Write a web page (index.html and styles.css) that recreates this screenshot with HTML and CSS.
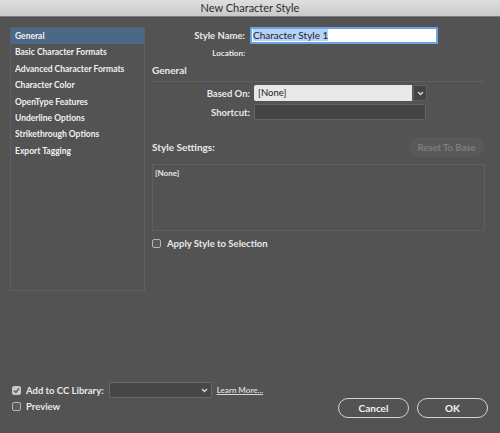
FILE: index.html
```html
<!DOCTYPE html>
<html lang="en">
  <head>
    <meta charset="UTF-8" />
    <title>New Character Style</title>
    <link rel="stylesheet" href="styles.css">
  </head>
  <body>
    <div class="dialog">
      <div class="titlebar">New Character Style</div>

      <div class="main">
        <ul class="sidebar">
          <li class="active">General</li>
          <li>Basic Character Formats</li>
          <li>Advanced Character Formats</li>
          <li>Character Color</li>
          <li>OpenType Features</li>
          <li>Underline Options</li>
          <li>Strikethrough Options</li>
          <li>Export Tagging</li>
        </ul>

        <div class="content">
          <div class="row name-row">
            <label class="label">Style Name:</label>
            <div class="name-input"><span class="selected">Character Style 1</span></div>
          </div>
          <div class="row location-row">
            <span class="label small">Location:</span>
          </div>

          <h3 class="section">General</h3>
          <div class="divider"></div>

          <div class="row field-row">
            <label class="label wide">Based On:</label>
            <div class="select">[None]</div>
            <div class="select-btn">
              <svg width="7" height="5" viewBox="0 0 7 5"><polyline points="1,1 3.5,3.5 6,1" fill="none" stroke="#d8d8d8" stroke-width="1.3"/></svg>
            </div>
          </div>
          <div class="row field-row">
            <label class="label wide">Shortcut:</label>
            <div class="shortcut"></div>
          </div>

          <div class="settings-head">
            <span class="section">Style Settings:</span>
            <button class="reset-btn" disabled>Reset To Base</button>
          </div>
          <div class="settings-box">[None]</div>

          <div class="check-row apply">
            <span class="checkbox"></span>
            <span>Apply Style to Selection</span>
          </div>
        </div>
      </div>

      <div class="footer">
        <div class="footer-left">
          <div class="check-row">
            <span class="checkbox checked">
              <svg width="7" height="7" viewBox="0 0 7 7"><polyline points="1,3.6 2.9,5.5 6,1.3" fill="none" stroke="#5a5a5a" stroke-width="1.4"/></svg>
            </span>
            <span>Add to CC Library:</span>
            <div class="library-select">
              <svg width="7" height="5" viewBox="0 0 7 5"><polyline points="1,1 3.5,3.5 6,1" fill="none" stroke="#d8d8d8" stroke-width="1.3"/></svg>
            </div>
            <a class="learn-more">Learn More...</a>
          </div>
          <div class="check-row">
            <span class="checkbox"></span>
            <span>Preview</span>
          </div>
        </div>
        <div class="buttons">
          <button class="pill">Cancel</button>
          <button class="pill">OK</button>
        </div>
      </div>
    </div>
  </body>
</html>
```

FILE: styles.css
```css
* {
  margin: 0;
  padding: 0;
  box-sizing: border-box;
}

body {
  font-family: Lato, "Open Sans", sans-serif;
  background-color: #535353;
  color: #e8e8e8;
  width: 500px;
  height: 433px;
  overflow: hidden;
}

.dialog {
  height: 433px;
  display: flex;
  flex-direction: column;
}

.titlebar {
  height: 17px;
  line-height: 16px;
  text-align: center;
  font-size: 11px;
  color: #2e2e2e;
  background: linear-gradient(#dedede, #c9c9c9);
  border-bottom: 1px solid #7d7d7d;
}

.main {
  display: flex;
  gap: 7px;
  padding: 10px 15px 0 10px;
}

/* 左侧列表 */
.sidebar {
  list-style: none;
  width: 135px;
  height: 264px;
  border: 1px solid #5f5f5f;
  font-size: 8.5px;
  font-weight: bold;
  color: #f0f0f0;
}

.sidebar li {
  height: 16.4px;
  line-height: 16.4px;
  padding-left: 4px;
  white-space: nowrap;
}

.sidebar li.active {
  background-color: #4b6886;
}

.content {
  width: 333px;
  display: flex;
  flex-direction: column;
  font-size: 9.5px;
  font-weight: bold;
}

.row {
  display: flex;
  align-items: center;
}

.label {
  width: 93px;
  text-align: right;
  margin-right: 5px;
  white-space: nowrap;
}

.label.wide {
  width: 98px;
  margin-right: 4px;
}

.label.small {
  font-size: 8px;
}

.name-row {
  height: 17px;
}

.name-input {
  width: 188px;
  height: 17px;
  background-color: #fff;
  border: 2px solid #6aa3e6;
  border-radius: 1px;
  padding-left: 1px;
  line-height: 13px;
  font-weight: normal;
  font-size: 10px;
  color: #1e1e1e;
}

.selected {
  background-color: #b4d3f6;
}

.location-row {
  height: 10px;
  margin-top: 4px;
}

.section {
  font-size: 10px;
  font-weight: bold;
}

h3.section {
  margin-top: 6px;
  height: 12px;
  line-height: 12px;
}

.divider {
  margin-top: 5px;
  border-top: 1px solid #5f5f5f;
}

.field-row {
  height: 16px;
  margin-top: 3px;
}

.select {
  width: 158px;
  height: 16px;
  line-height: 15px;
  background-color: #e8e8e8;
  color: #222;
  padding-left: 4px;
  font-weight: normal;
  border-radius: 2px 0 0 2px;
}

.select-btn {
  width: 14px;
  height: 16px;
  margin-left: 1px;
  background-color: #444;
  border: 1px solid #616161;
  border-radius: 0 2px 2px 0;
  display: flex;
  align-items: center;
  justify-content: center;
}

.shortcut {
  width: 172px;
  height: 16px;
  background-color: #454545;
  border: 1px solid #646464;
  border-radius: 2px;
}

.settings-head {
  display: flex;
  justify-content: space-between;
  align-items: center;
  margin-top: 17px;
  height: 20px;
}

.reset-btn {
  width: 75px;
  height: 20px;
  margin-right: 1px;
  border: none;
  border-radius: 10px;
  background-color: #595959;
  color: #7e7e7e;
  font-family: inherit;
  font-size: 9.5px;
  font-weight: bold;
}

.settings-box {
  margin-top: 7px;
  height: 67px;
  border: 1px solid #5f5f5f;
  padding: 3px 2px;
  font-size: 8px;
}

.check-row {
  display: flex;
  align-items: center;
  height: 16px;
  gap: 6px;
  font-size: 9.5px;
  font-weight: bold;
  white-space: nowrap;
}

.check-row.apply {
  margin-top: 4px;
}

.checkbox {
  width: 9px;
  height: 9px;
  border: 1px solid #b4b4b4;
  border-radius: 2px;
  background-color: #5b5b5b;
  display: flex;
  align-items: center;
  justify-content: center;
}

.checkbox.checked {
  background-color: #c9c9c9;
  border-color: #c9c9c9;
}

/* 底部 */
.footer {
  margin-top: auto;
  display: flex;
  justify-content: space-between;
  padding: 0 12px 15px 12px;
}

.footer .check-row {
  gap: 5px;
}

.library-select {
  width: 103px;
  height: 16px;
  background-color: #474747;
  border: 1px solid #676767;
  border-radius: 2px;
  display: flex;
  align-items: center;
  justify-content: flex-end;
  padding-right: 3px;
}

.learn-more {
  font-size: 8px;
  color: #d6d6d6;
  text-decoration: underline;
}

.buttons {
  display: flex;
  gap: 8px;
  margin-top: 16px;
}

.pill {
  width: 71px;
  height: 20px;
  border: 1.5px solid #d4d4d4;
  border-radius: 10px;
  background: transparent;
  color: #f2f2f2;
  font-family: inherit;
  font-size: 10px;
  font-weight: bold;
}
```
